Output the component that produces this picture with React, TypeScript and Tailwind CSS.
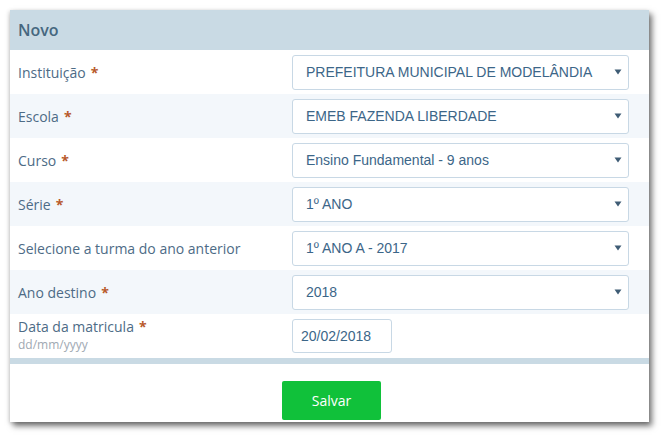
import React from "react";

interface Field {
  label: string;
  required: boolean;
  value: string;
}

const fields: Field[] = [
  { label: "Instituição", required: true, value: "PREFEITURA MUNICIPAL DE MODELÂNDIA" },
  { label: "Escola", required: true, value: "EMEB FAZENDA LIBERDADE" },
  { label: "Curso", required: true, value: "Ensino Fundamental - 9 anos" },
  { label: "Série", required: true, value: "1º ANO" },
  { label: "Selecione a turma do ano anterior", required: false, value: "1º ANO A - 2017" },
  { label: "Ano destino", required: true, value: "2018" },
];

function Caret() {
  return (
    <svg width="8" height="6" viewBox="0 0 8 6" className="shrink-0">
      <path d="M0.5 0.5 L7.5 0.5 L4 5.5 Z" fill="#3f5c75" />
    </svg>
  );
}

function Label({ text, required }: { text: string; required: boolean }) {
  return (
    <span className="text-[14px] text-[#4d6b86]">
      {text}
      {required && <span className="ml-[5px] font-bold text-[#b85a2c]">*</span>}
    </span>
  );
}

export default function App() {
  return (
    <div className="min-h-[438px] w-[665px] bg-white pl-[10px] pt-[10px] font-['Open_Sans',sans-serif]">
      <div className="w-[639px] bg-white shadow-[3px_4px_6px_rgba(0,0,0,0.55),-1px_1px_4px_rgba(0,0,0,0.15)]">
        <div className="flex h-[40px] items-center bg-[#c9dae4] pl-2 text-[16px] font-semibold text-[#46677f]">
          Novo
        </div>
        {fields.map((field, i) => (
          <div
            key={field.label}
            className={`flex h-[44px] items-center ${i % 2 === 1 ? "bg-[#f3f7fb]" : "bg-white"}`}
          >
            <div className="w-[282px] pl-2">
              <Label text={field.label} required={field.required} />
            </div>
            <div className="flex h-[35px] w-[337px] items-center justify-between rounded-[3px] border border-[#c8d8e5] bg-white pl-[13px] pr-[6px] font-['Liberation_Sans',Arial,sans-serif] text-[14px] text-[#3c6688]">
              <span>{field.value}</span>
              <Caret />
            </div>
          </div>
        ))}
        <div className="flex h-[44px] items-center bg-white">
          <div className="flex w-[282px] flex-col pl-2 leading-[18px]">
            <Label text="Data da matricula" required={true} />
            <span className="text-[12px] text-[#a0a9b2]">dd/mm/yyyy</span>
          </div>
          <div className="flex h-[34px] w-[100px] items-center rounded-[3px] border border-[#c8d8e5] bg-white pl-[8px] font-['Liberation_Sans',Arial,sans-serif] text-[14px] text-[#3c6688]">
            20/02/2018
          </div>
        </div>
        <div className="h-[6px] bg-[#c9dae4]" />
        <div className="flex h-[58px] justify-center pl-[4px] pt-[17px]">
          <button className="h-[39px] w-[99px] rounded-[2px] bg-[#10c13a] text-[14px] text-white">
            Salvar
          </button>
        </div>
      </div>
    </div>
  );
}
